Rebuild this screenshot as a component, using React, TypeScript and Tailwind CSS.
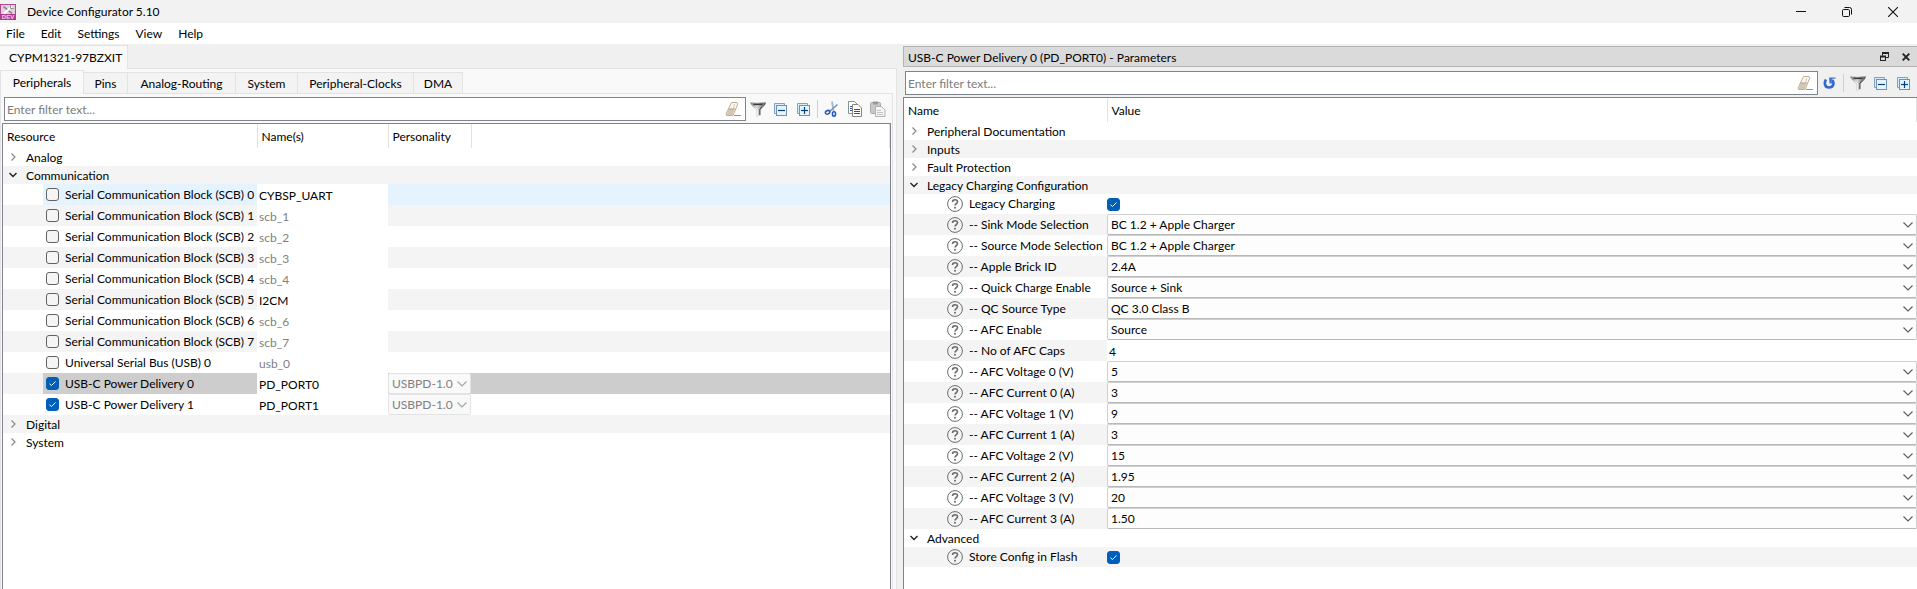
import React, { useState } from "react";

function AppLogo() {
  return (
    <svg width="16" height="16" viewBox="0 0 16 16" aria-hidden="true">
      <rect width="16" height="16" fill="#b0488f" />
      <rect x="1" y="1" width="14" height="9" fill="#ddd2da" />
      <path d="M3.5 2.5l8.5 7" stroke="#7d7d7d" strokeWidth="1.6" />
      <path d="M12 2.5L4 9.5" stroke="#fff" strokeWidth="2" />
      <path d="M10.5 1.5v3h3" fill="none" stroke="#8b8b8b" strokeWidth="1" />
      <rect y="10" width="16" height="6" fill="#b23a8c" />
      <text x="8" y="15" fontSize="6" fontWeight="700" textAnchor="middle" fill="#f3cfe5" fontFamily="Liberation Sans, sans-serif">
        DEV
      </text>
    </svg>
  );
}

function EraserIcon() {
  return (
    <svg width="16" height="16" viewBox="0 0 16 16" fill="none" aria-hidden="true">
      <path d="M6.500 1.500h5.500l.8 1.500L8 14.500H1.500L1 13z" fill="#faf6f0" stroke="#c2ae92" />
      <path d="M3.500 8h6L7 14H1.500z" fill="#d3c6b6" />
      <path d="M3.500 8h6.500" stroke="#b7a184" />
      <path d="M9.500 3L7 14.500" stroke="#cdbda6" strokeWidth=".8" />
      <path d="M9 14.500h7" stroke="#a39078" />
    </svg>
  );
}

function FunnelIcon() {
  return (
    <svg width="16" height="17" viewBox="0 0 16 17" aria-hidden="true">
      <defs>
        <linearGradient id="funnel" x1="0" x2="1">
          <stop offset="0" stopColor="#777" />
          <stop offset="0.45" stopColor="#d8d8d8" />
          <stop offset="1" stopColor="#4a4a4a" />
        </linearGradient>
      </defs>
      <path d="M0 1.500h16L15 4L10.500 9v5l-4 2V9L1.500 4z" fill="url(#funnel)" />
      <path d="M3.500 3.300h9" stroke="#3a3a3a" strokeWidth="1.600" />
      <path d="M4.500 5.500l3.200 3.500v6" stroke="#f1f1f1" strokeWidth="1" fill="none" />
      <path d="M12 5.500L9.800 8.500V14" stroke="#4a4a4a" strokeWidth="1" fill="none" />
    </svg>
  );
}

function StackIcon({ plus }: { plus?: boolean }) {
  return (
    <svg width="13" height="13" viewBox="0 0 13 13" fill="none" aria-hidden="true">
      <path d="M.5 10.500V.5h10v2M.5 10.500h2" stroke="#7ea1c4" fill="#d5ecfa" />
      <rect x="2.500" y="2.500" width="10" height="10" fill="#e4f4fd" stroke="#7490b0" />
      <path d="M4 7.500h7" stroke="#0a3f7e" strokeWidth="1.200" />
      {plus && <path d="M7.500 4v7" stroke="#0a3f7e" strokeWidth="1.200" />}
    </svg>
  );
}

function ScissorsIcon() {
  return (
    <svg width="16" height="16" viewBox="0 0 16 16" fill="none" aria-hidden="true">
      <path d="M8 .5l1.500 9.500" stroke="#9dbbd8" strokeWidth="1.800" />
      <path d="M13.500 3.500L5.500 10.500" stroke="#7895b5" strokeWidth="1.600" />
      <ellipse cx="3.600" cy="11.300" rx="2.300" ry="1.700" stroke="#2457bd" strokeWidth="1.500" transform="rotate(-25 3.600 11.300)" />
      <ellipse cx="10" cy="13" rx="1.600" ry="2.200" stroke="#2457bd" strokeWidth="1.500" />
    </svg>
  );
}

function CopyIcon() {
  return (
    <svg width="14" height="16" viewBox="0 0 14 16" fill="none" aria-hidden="true">
      <path d="M.5 12.500V.5h6l3 3" fill="#fff" stroke="#8f8f8f" />
      <path d="M.5 12.500h4" stroke="#8f8f8f" />
      <path d="M2 5.500h2M2 7.500h2M2 9.500h2" stroke="#2f5aa8" />
      <path d="M4.500 3.500h5.500l3.500 3.500v8.500h-9z" fill="#fff" stroke="#858585" />
      <path d="M6 8.500h6M6 10.500h6M6 12.500h6" stroke="#2452a4" strokeWidth="1.200" />
    </svg>
  );
}

function PasteIcon() {
  return (
    <svg width="16" height="16" viewBox="0 0 16 16" fill="none" aria-hidden="true">
      <rect x=".5" y="1.500" width="10" height="11" rx="1" fill="#c9c9c9" stroke="#a8a8a8" />
      <rect x="3" y=".5" width="5" height="3" fill="#999" />
      <path d="M5.500 5.500h6l3.500 3.500v6.500H5.500z" fill="#f6f6f6" stroke="#b1b1b1" />
      <path d="M7 9.500h4M7 11.500h6M7 13.500h6" stroke="#c2c2c2" />
    </svg>
  );
}

function ReloadIcon() {
  return (
    <svg width="13" height="14" viewBox="0 0 13 14" fill="none" aria-hidden="true">
      <path d="M3 3.500C1 6.500 1.500 11.500 6 11.500C10.500 11.500 11.300 7.500 9.500 4" stroke="#3467cf" strokeWidth="2.600" />
      <path d="M6 1.500h6.500v1.200H9.500v4.800H6.500z" fill="#4379dc" />
    </svg>
  );
}

function HelpIcon() {
  return (
    <svg width="16" height="16" viewBox="0 0 16 16" fill="none" stroke="#6b6b6b" aria-hidden="true">
      <circle cx="8" cy="8" r="7.400" strokeWidth="1" />
      <path d="M5.500 6C5.500 2.900 10.600 3 10.500 5.800C10.400 7.500 8 7.600 8 9.600" strokeWidth="1.600" />
      <circle cx="8" cy="11.800" r="1" fill="#6b6b6b" stroke="none" />
    </svg>
  );
}

function Twisty({ open }: { open: boolean }) {
  return (
    <svg width="10" height="10" viewBox="0 0 10 10" fill="none" aria-hidden="true">
      {open ? (
        <path d="M1.500 3l3.500 3.500L8.500 3" stroke="#222" strokeWidth="1.400" />
      ) : (
        <path d="M3.500 1.500L7 5L3.500 8.500" stroke="#888" strokeWidth="1.200" />
      )}
    </svg>
  );
}

function ToolButton({ label, children }: { label: string; children: React.ReactNode }) {
  return (
    <button type="button" aria-label={label} title={label} className="flex h-6 w-[23px] shrink-0 items-center justify-center">
      {children}
    </button>
  );
}

function ToolDivider() {
  return <div className="mx-[2px] mt-[3px] h-[18px] w-px shrink-0 bg-[#cfcfcf]" />;
}

function FilterBox({ label }: { label: string }) {
  return (
    <div className="flex h-6 min-w-0 flex-1 items-center border border-[#7f848c] bg-white pr-1">
      <input
        type="text"
        aria-label={label}
        placeholder="Enter filter text..."
        className="h-full min-w-0 flex-1 bg-transparent pt-px pl-[2px] outline-none placeholder:text-[#7c7c7c]"
      />
      <button type="button" aria-label="Clear filter">
        <EraserIcon />
      </button>
    </div>
  );
}

function Check({ id, label, initial }: { id?: string; label?: string; initial: boolean }) {
  const [on, setOn] = useState(initial);
  return (
    <span className="grid size-[13px] shrink-0">
      <input
        id={id}
        type="checkbox"
        aria-label={label}
        checked={on}
        onChange={(e) => setOn(e.target.checked)}
        className="col-start-1 row-start-1 size-[13px] appearance-none rounded-[3px] border border-[#626262] bg-[#f5f5f5] checked:border-[#005fb8] checked:bg-[#005fb8]"
      />
      {on && (
        <svg viewBox="0 0 13 13" fill="none" className="pointer-events-none col-start-1 row-start-1 size-[13px]" aria-hidden="true">
          <path d="M3.500 6.800L5.500 8.500L9.500 4.500" stroke="#fff" strokeWidth="1" />
        </svg>
      )}
    </span>
  );
}

function Combo({ id, label, value, disabled }: { id?: string; label?: string; value: string; disabled?: boolean }) {
  return (
    <div className="grid h-[21px] items-center">
      <select
        id={id}
        aria-label={label}
        disabled={disabled}
        defaultValue={value}
        className="col-start-1 row-start-1 h-[21px] w-full appearance-none rounded-[2px] border border-[#d0d0d0] border-b-[#b8b8b8] bg-[#fdfdfd] pl-[3px] text-black disabled:border-[#e3e3e3] disabled:bg-[#f9f9f9] disabled:text-[#808080] disabled:opacity-100"
      >
        <option>{value}</option>
      </select>
      <svg
        width="10"
        height="6"
        viewBox="0 0 10 6"
        fill="none"
        className={
          disabled
            ? "pointer-events-none col-start-1 row-start-1 mr-1 justify-self-end text-[#a3a3a3]"
            : "pointer-events-none col-start-1 row-start-1 mr-1 justify-self-end text-[#5c5c5c]"
        }
        aria-hidden="true"
      >
        <path d="M.5 .5L5 5L9.500 .5" stroke="currentColor" strokeWidth="1.100" />
      </svg>
    </div>
  );
}

type Resource = { label: string; name?: string; placeholder?: string; personality?: string; on?: boolean; tone: string };

const resources: Resource[] = [
  { label: "Serial Communication Block (SCB) 0", name: "CYBSP_UART", tone: "hover" },
  { label: "Serial Communication Block (SCB) 1", placeholder: "scb_1", tone: "odd" },
  { label: "Serial Communication Block (SCB) 2", placeholder: "scb_2", tone: "even" },
  { label: "Serial Communication Block (SCB) 3", placeholder: "scb_3", tone: "odd" },
  { label: "Serial Communication Block (SCB) 4", placeholder: "scb_4", tone: "even" },
  { label: "Serial Communication Block (SCB) 5", name: "I2CM", tone: "odd" },
  { label: "Serial Communication Block (SCB) 6", placeholder: "scb_6", tone: "even" },
  { label: "Serial Communication Block (SCB) 7", placeholder: "scb_7", tone: "odd" },
  { label: "Universal Serial Bus (USB) 0", placeholder: "usb_0", tone: "even" },
  { label: "USB-C Power Delivery 0", name: "PD_PORT0", personality: "USBPD-1.0", on: true, tone: "selected" },
  { label: "USB-C Power Delivery 1", name: "PD_PORT1", personality: "USBPD-1.0", on: true, tone: "even" },
];

const rowTone: Record<string, string> = {
  even: "bg-white",
  odd: "bg-[#f4f4f4]",
  hover: "bg-[#e5f3ff]",
  selected: "bg-[#cdcdcd]",
};

const gutterTone: Record<string, string> = {
  even: "bg-white",
  odd: "bg-[#f4f4f4]",
  hover: "bg-white",
  selected: "bg-[#f4f4f4]",
};

function GroupRow({ label, open, shaded, span }: { label: string; open: boolean; shaded?: boolean; span: number }) {
  return (
    <tr className={shaded ? "bg-[#f4f4f4]" : "bg-white"}>
      <td colSpan={span} className="h-[18px] p-0">
        <button type="button" aria-expanded={open} className="flex h-[18px] items-center gap-2 pl-[5px]">
          <Twisty open={open} />
          <span className="pt-[2px]">{label}</span>
        </button>
      </td>
    </tr>
  );
}

function ResourceRow({ row, index }: { row: Resource; index: number }) {
  const id = `resource-${index}`;
  return (
    <tr className={rowTone[row.tone]}>
      <td className="h-[21px] p-0">
        <div className="flex h-[21px]">
          <div className={`w-10 shrink-0 ${gutterTone[row.tone]}`} />
          <div className="flex items-center gap-[6px] pl-[3px] whitespace-nowrap">
            <Check id={id} initial={!!row.on} />
            <label htmlFor={id}>{row.label}</label>
          </div>
        </div>
      </td>
      <td className="bg-white p-0">
        <input
          type="text"
          aria-label={`Name of ${row.label}`}
          defaultValue={row.name}
          placeholder={row.placeholder}
          className="block h-[21px] w-full bg-white pt-[2px] pl-[2px] outline-none placeholder:text-[#808080]"
        />
      </td>
      <td className="p-0">
        {row.personality && <Combo label={`Personality of ${row.label}`} value={row.personality} disabled />}
      </td>
      <td className="p-0" />
    </tr>
  );
}

function HeadCell({ children }: { children: React.ReactNode }) {
  return <th className="border-r border-[#e2e2e2] p-0 pt-[2px] pl-1 font-normal">{children}</th>;
}

function ResourceTable() {
  return (
    <table className="w-full table-fixed border-collapse">
      <colgroup>
        <col className="w-[254px]" />
        <col className="w-[131px]" />
        <col className="w-[83px]" />
        <col />
      </colgroup>
      <thead>
        <tr className="h-6 text-left">
          <HeadCell>Resource</HeadCell>
          <HeadCell>Name(s)</HeadCell>
          <HeadCell>Personality</HeadCell>
          <td className="border-r border-[#e2e2e2] p-0" />
        </tr>
      </thead>
      <tbody>
        <GroupRow label="Analog" open={false} span={4} />
        <GroupRow label="Communication" open shaded span={4} />
        {resources.map((row, i) => (
          <ResourceRow key={row.label} row={row} index={i} />
        ))}
        <GroupRow label="Digital" open={false} shaded span={4} />
        <GroupRow label="System" open={false} span={4} />
      </tbody>
    </table>
  );
}

type Param = { label: string; value: string; kind?: "text" };

const params: Param[] = [
  { label: "-- Sink Mode Selection", value: "BC 1.2 + Apple Charger" },
  { label: "-- Source Mode Selection", value: "BC 1.2 + Apple Charger" },
  { label: "-- Apple Brick ID", value: "2.4A" },
  { label: "-- Quick Charge Enable", value: "Source + Sink" },
  { label: "-- QC Source Type", value: "QC 3.0 Class B" },
  { label: "-- AFC Enable", value: "Source" },
  { label: "-- No of AFC Caps", value: "4", kind: "text" },
  { label: "-- AFC Voltage 0 (V)", value: "5" },
  { label: "-- AFC Current 0 (A)", value: "3" },
  { label: "-- AFC Voltage 1 (V)", value: "9" },
  { label: "-- AFC Current 1 (A)", value: "3" },
  { label: "-- AFC Voltage 2 (V)", value: "15" },
  { label: "-- AFC Current 2 (A)", value: "1.95" },
  { label: "-- AFC Voltage 3 (V)", value: "20" },
  { label: "-- AFC Current 3 (A)", value: "1.50" },
];

function ParamLabel({ id, label }: { id: string; label: string }) {
  return (
    <div className="flex items-center gap-[6px] pl-[43px] whitespace-nowrap">
      <HelpIcon />
      <label htmlFor={id}>{label}</label>
    </div>
  );
}

function FlagRow({ id, label, shaded }: { id: string; label: string; shaded?: boolean }) {
  return (
    <tr className={shaded ? "bg-[#f4f4f4]" : "bg-white"}>
      <td className="h-5 p-0">
        <ParamLabel id={id} label={label} />
      </td>
      <td className="p-0">
        <div className="flex h-5 items-center">
          <Check id={id} initial />
        </div>
      </td>
    </tr>
  );
}

function ParameterTable() {
  return (
    <table className="w-full table-fixed border-collapse">
      <colgroup>
        <col className="w-[203px]" />
        <col />
      </colgroup>
      <thead>
        <tr className="h-6 text-left">
          <HeadCell>Name</HeadCell>
          <HeadCell>Value</HeadCell>
        </tr>
      </thead>
      <tbody>
        <GroupRow label="Peripheral Documentation" open={false} span={2} />
        <GroupRow label="Inputs" open={false} shaded span={2} />
        <GroupRow label="Fault Protection" open={false} span={2} />
        <GroupRow label="Legacy Charging Configuration" open shaded span={2} />
        <FlagRow id="legacy-charging" label="Legacy Charging" />
        {params.map((p, i) => {
          const id = `param-${i}`;
          return (
            <tr key={p.label} className={i % 2 ? "bg-white" : "bg-[#f4f4f4]"}>
              <td className="h-[21px] p-0">
                <ParamLabel id={id} label={p.label} />
              </td>
              <td className="p-0">
                {p.kind === "text" ? (
                  <input id={id} type="text" defaultValue={p.value} className="block h-[21px] w-full bg-white pt-[2px] pl-[2px] outline-none" />
                ) : (
                  <Combo id={id} value={p.value} />
                )}
              </td>
            </tr>
          );
        })}
        <GroupRow label="Advanced" open span={2} />
        <FlagRow id="store-config" label="Store Config in Flash" shaded />
      </tbody>
    </table>
  );
}

const otherTabs = ["Pins", "Analog-Routing", "System", "Peripheral-Clocks", "DMA"];
const otherTabWidths = ["w-11", "w-[108px]", "w-[62px]", "w-[116px]", "w-[49px]"];

export default function App() {
  return (
    <div className="flex h-screen flex-col overflow-hidden bg-[#f0f0f0] font-['Lato','Liberation_Sans',sans-serif] text-[12px] leading-4 text-black">
      <header className="flex h-[23px] shrink-0 items-center bg-[#f3f2f3] pr-px">
        <AppLogo />
        <h1 className="flex-1 pl-[11px]">Device Configurator 5.10</h1>
        <button type="button" aria-label="Minimize" className="flex h-full w-[46px] items-center justify-center">
          <svg width="10" height="10" viewBox="0 0 10 10" aria-hidden="true">
            <path d="M0 4.500h10" stroke="#111" />
          </svg>
        </button>
        <button type="button" aria-label="Restore" className="flex h-full w-[46px] items-center justify-center">
          <svg width="10" height="10" viewBox="0 0 10 10" fill="none" stroke="#111" aria-hidden="true">
            <rect x=".5" y="2.500" width="7" height="7" rx="1.200" />
            <path d="M2.500 .5h5a2 2 0 0 1 2 2v5" />
          </svg>
        </button>
        <button type="button" aria-label="Close" className="flex h-full w-[46px] items-center justify-center">
          <svg width="10" height="10" viewBox="0 0 10 10" aria-hidden="true">
            <path d="M0 0l10 10M10 0L0 10" stroke="#111" strokeWidth="1.100" />
          </svg>
        </button>
      </header>

      <nav className="flex h-[21px] shrink-0 items-center gap-4 bg-white pl-[6px]">
        {["File", "Edit", "Settings", "View", "Help"].map((m) => (
          <button key={m} type="button">
            {m}
          </button>
        ))}
      </nav>

      <main className="grid min-h-0 flex-1 grid-cols-[897fr_1014fr] gap-[6px]">
        <section className="flex min-w-0 flex-col pt-px">
          <div className="flex h-6 shrink-0 items-stretch">
            <button type="button" className="w-32 border-t border-r border-[#e3e3e3] bg-[#f9f9f9] pl-[9px] text-left">
              CYPM1321-97BZXIT
            </button>
            <div className="flex-1 border-b border-[#e3e3e3]" />
          </div>
          <div className="flex min-h-0 flex-1 flex-col border-r border-[#e3e3e3] bg-[#f9f9f9] pr-[3px]">
            <div role="tablist" className="flex h-[25px] shrink-0 items-end pt-px">
              <button type="button" role="tab" aria-selected className="h-6 w-[84px] border-x border-t border-[#e3e3e3] bg-[#f9f9f9]">
                Peripherals
              </button>
              {otherTabs.map((t, i) => (
                <button
                  key={t}
                  type="button"
                  role="tab"
                  aria-selected={false}
                  className={`h-[22px] border-y border-r border-[#e3e3e3] bg-[#f3f3f3] pt-px ${otherTabWidths[i]}`}
                >
                  {t}
                </button>
              ))}
              <div className="flex-1 self-stretch border-b border-[#e3e3e3]" />
            </div>
            <div className="flex min-h-0 flex-1 flex-col border-x border-[#e3e3e3] pr-px">
              <div className="flex h-[29px] shrink-0 items-start pt-[3px] pr-[2px] pl-[3px]">
                <FilterBox label="Filter resources" />
                <ToolButton label="Filter options"><FunnelIcon /></ToolButton>
                <ToolButton label="Collapse all"><StackIcon /></ToolButton>
                <ToolButton label="Expand all"><StackIcon plus /></ToolButton>
                <ToolDivider />
                <ToolButton label="Cut"><ScissorsIcon /></ToolButton>
                <ToolButton label="Copy"><CopyIcon /></ToolButton>
                <ToolButton label="Paste"><PasteIcon /></ToolButton>
              </div>
              <div className="ml-px min-h-0 flex-1 overflow-hidden border-x border-t border-[#7f848c] bg-white">
                <ResourceTable />
              </div>
            </div>
          </div>
        </section>

        <section className="flex min-w-0 flex-col pt-[2px]">
          <div className="flex h-[21px] shrink-0 items-center border border-r-0 border-[#b4b4b4] bg-[#dadada] pr-px pl-1">
            <h2 className="flex-1 pt-[2px]">USB-C Power Delivery 0 (PD_PORT0) - Parameters</h2>
            <button type="button" aria-label="Float panel" className="flex w-[21px] justify-center">
              <svg width="9" height="10" viewBox="0 0 9 10" fill="none" stroke="#222" aria-hidden="true">
                <path d="M2.500 3.500V1h6v4.500H6" />
                <path d="M2 1h7M0 4.500h6" strokeWidth="2" />
                <rect x=".5" y="4.500" width="5" height="4" />
              </svg>
            </button>
            <button type="button" aria-label="Close panel" className="flex w-[21px] justify-center">
              <svg width="8" height="8" viewBox="0 0 8 8" aria-hidden="true">
                <path d="M.7 .7l6.600 6.600M7.300 .7L.7 7.300" stroke="#222" strokeWidth="1.900" />
              </svg>
            </button>
          </div>
          <div className="flex h-[30px] shrink-0 items-start pt-1 pr-[2px] pl-[2px]">
            <FilterBox label="Filter parameters" />
            <ToolButton label="Reset to defaults"><ReloadIcon /></ToolButton>
            <ToolDivider />
            <ToolButton label="Filter options"><FunnelIcon /></ToolButton>
            <ToolButton label="Collapse all"><StackIcon /></ToolButton>
            <ToolButton label="Expand all"><StackIcon plus /></ToolButton>
          </div>
          <div className="min-h-0 flex-1 overflow-hidden border-t border-l border-[#7f848c] bg-white">
            <ParameterTable />
          </div>
        </section>
      </main>
    </div>
  );
}
